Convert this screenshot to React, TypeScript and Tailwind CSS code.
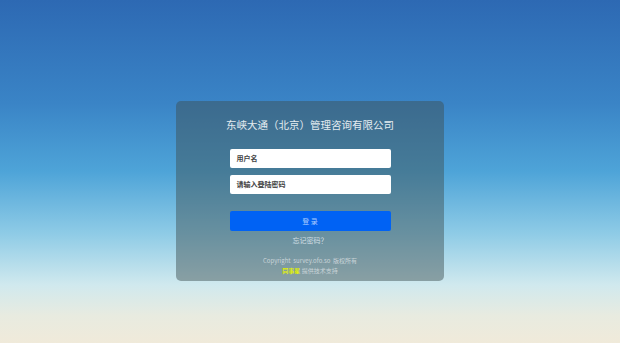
import React from "react";

export default function App() {
  const font = { fontFamily: '"Noto Sans CJK SC", "Liberation Sans", sans-serif' };
  return (
    <div
      className="w-[620px] h-[343px] overflow-hidden flex flex-col items-center pt-[101px] bg-[linear-gradient(to_bottom,#2d69b3_0%,#3a84c6_30%,#4ea4d8_50%,#8ecbe6_68%,#d0e9ee_83%,#e8ebe0_92%,#f0eada_100%)]"
      style={font}
    >
      <div className="w-[268px] h-[180px] rounded-[5px] bg-[rgba(62,78,80,0.47)] flex flex-col items-center pt-[18px]">
        <div className="text-[10.5px] leading-[12px] text-[#e4ecf0] whitespace-nowrap">
          东峡大通（北京）管理咨询有限公司
        </div>
        <div className="mt-[18px] w-[161px] h-[19px] bg-white rounded-[2px] flex items-center px-[7px] text-[7px] font-semibold text-[#444]">
          用户名
        </div>
        <div className="mt-[7px] w-[161px] h-[19px] bg-white rounded-[2px] flex items-center px-[7px] text-[7px] font-semibold text-[#444]">
          请输入登陆密码
        </div>
        <div className="mt-[17px] w-[161px] h-[20px] bg-[#0062f4] rounded-[2px] flex items-center justify-center text-[7px] text-[#a9cbff]">
          登 录
        </div>
        <div className="mt-[5px] text-[7px] leading-[8px] text-[#d3dfe4]">忘记密码？</div>
        <div className="mt-[12px] text-[6px] leading-[10px] text-[#c9d4d8] whitespace-nowrap">
          Copyright&nbsp; survey.ofo.so&nbsp; 版权所有
        </div>
        <div className="text-[6px] leading-[10px] text-[#c9d4d8] whitespace-nowrap">
          <span className="text-[#e2f200] font-bold">同事星</span> 提供技术支持
        </div>
      </div>
    </div>
  );
}
